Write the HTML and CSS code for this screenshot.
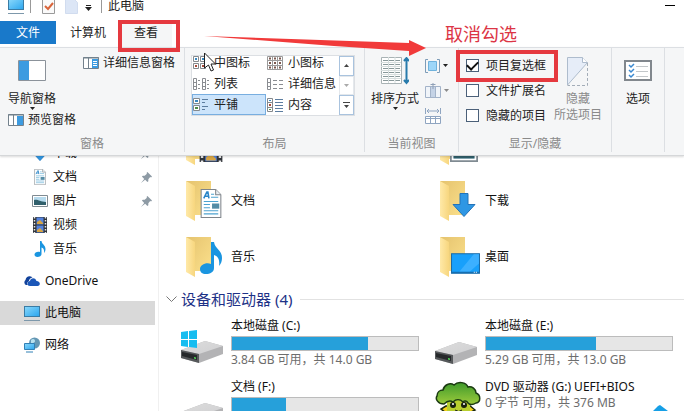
FILE: index.html
```html
<!DOCTYPE html>
<html lang="zh-CN">
<head>
  <meta charset="UTF-8" />
  <meta name="viewport" content="width=device-width, initial-scale=1" />
  <title>此电脑</title>
  <link rel="stylesheet" href="styles.css">
</head>
<body>

  <!-- shared icons -->
  <svg class="defs" aria-hidden="true">
    <defs>
      <linearGradient id="screenFill" x1="0" y1="0" x2="1" y2="1">
        <stop offset="0" stop-color="#8ad8fb" /><stop offset="1" stop-color="#2aa5ee" />
      </linearGradient>
      <linearGradient id="folderFill" x1="0" y1="0" x2="1" y2="1">
        <stop offset="0" stop-color="#e5c36e" /><stop offset="1" stop-color="#fbe08c" />
      </linearGradient>
      <linearGradient id="flapFill" x1="0" y1="0" x2="1" y2="0">
        <stop offset="0" stop-color="#ffe9a8" /><stop offset="1" stop-color="#f7d67e" />
      </linearGradient>
      <linearGradient id="driveFill" x1="0" y1="0" x2="1" y2="1">
        <stop offset="0" stop-color="#dcdcdc" /><stop offset="1" stop-color="#d0d0d2" />
      </linearGradient>
      <linearGradient id="leafFill" x1="0" y1="0" x2="0" y2="1">
        <stop offset="0" stop-color="#3f9a2c" /><stop offset="1" stop-color="#9ccb3b" />
      </linearGradient>
      <symbol id="pc" viewBox="0 0 16 16">
        <rect x=".5" y="1.5" width="15" height="10" fill="url(#screenFill)" stroke="#3a7ca5" />
        <path d="M0 15.5h16" stroke="#7d98ab" />
      </symbol>
      <symbol id="note" viewBox="0 0 22 32">
        <path d="M11 0h3c1 7 8 8 8 16 0 3-1 6-3 8 1-6-1-10-5-11v13c0 4-4 6-8 6-4 0-6-2-6-5 0-4 6-7 11-5z" fill="#1a95e0" />
      </symbol>
      <symbol id="doc" viewBox="0 0 20 28">
        <path d="M.5.5h14l5 5v22H.5z" fill="#fff" stroke="#7f858b" />
        <path d="M14.5.5v5h5" fill="#e8eef2" stroke="#7f858b" />
        <path d="M3 9 6 3h1l1 6M4 7h4" stroke="#2a86c8" stroke-width="1.5" fill="none" />
        <path d="M10 5h3M10 8h7M3 12h14M3 15h6M3 18h6M3 21h14M3 24h14" stroke="#4da3d0" />
        <path d="M11 14h7v5h-7z" fill="#548ca5" />
      </symbol>
      <symbol id="film" viewBox="0 0 16 16">
        <path d="M1 0h14v16H1z" fill="#30343a" />
        <path d="M4.5.5h7v7h-7zM4.5 8.5h7v7h-7z" fill="#5583dd" />
        <path d="M5 5l3-2 3 3v1H5zM5 13l3-2 3 3v1H5z" fill="#d8a543" />
        <path d="M2.5 0v16M13.5 0v16" stroke="#e8e8e8" stroke-width="1.5" stroke-dasharray="1.5 1.5" />
      </symbol>
      <symbol id="photo" viewBox="0 0 16 12">
        <path d="M.5.5h15v11H.5z" fill="#fff" stroke="#808b92" />
        <path d="M2 2h12v8H2z" fill="#b7dbee" />
        <path d="M2 5c4-1 6 2 12 2v3H2z" fill="#31606c" />
      </symbol>
      <symbol id="arrowDown" viewBox="0 0 24 24">
        <path d="M8 .5h8v11h7L12 23.5 1 11.5h7z" fill="#2f97e4" stroke="#2373b8" />
      </symbol>
      <symbol id="pin" viewBox="0 0 12 12">
        <path d="M7 0l5 5-1 1-1-.5L8 8v2L7 11 4.500 8.500 0 12 3.500 7.500 1 5l1-1h2l2.500-2L6 1z" fill="#8e9ba5" />
      </symbol>
      <symbol id="folder" viewBox="0 0 26 42">
        <path d="M0 1h25v34H8z" fill="url(#folderFill)" />
        <path d="M0 1l9 5v35l-9-5z" fill="url(#flapFill)" />
      </symbol>
      <symbol id="drive" viewBox="0 0 42 22">
        <path d="M0 9 24 0l18 5v8L18 22 0 17z" fill="#b3b3b5" />
        <path d="M0 9 24 0l18 5-24 8z" fill="url(#driveFill)" />
        <path d="M0 9l18 4v9L0 17z" fill="#55585a" />
        <path d="M1 11l15 3v5L1 15z" fill="#26292b" />
        <path d="M13 16l2 .5v1.5l-2-.5z" fill="#53dc58" />
      </symbol>
      <symbol id="caret" viewBox="0 0 5 3">
        <path d="M0 0h5L2.5 3z" fill="currentColor" />
      </symbol>
    </defs>
  </svg>

  <div class="window">
    <header class="titlebar">
      <svg class="icon16" aria-hidden="true"><use href="#pc" /></svg>
      <span class="sep"></span>
      <button class="quick" aria-label="属性">
        <svg width="13" height="16"><path d="M.5.5h12v15H.5z" fill="#fafafa" stroke="#9a9a9a" /><path d="M3 8l3 3 5-6" fill="none" stroke="#d9653b" stroke-width="2" /></svg>
      </button>
      <button class="quick" aria-label="新建文件夹">
        <svg width="13" height="16"><path d="M.5.5h8l4 4v11H.5z" fill="#dce6f6" stroke="#d1dcef" /></svg>
      </button>
      <button class="quick small" aria-label="自定义快速访问工具栏">
        <svg width="7" height="6"><path d="M1 0h5v1H1zM0 2h7L3.5 6z" fill="#222" /></svg>
      </button>
      <span class="sep"></span>
      <span class="title">此电脑</span>
      <button class="minimize" aria-label="最小化"></button>
    </header>

    <nav class="tabs">
      <button class="tab file">文件</button>
      <button class="tab">计算机</button>
      <button class="tab active">查看</button>
    </nav>

    <section class="ribbon">
      <div class="group panes">
        <div class="tools">
          <div class="stack">
            <button class="big">
              <svg width="28" height="21"><path d="M.5.5h27v20H.5z" fill="#fff" stroke="#8b929a" /><path d="M1 1h10v19H1z" fill="#3d9be0" /></svg>
              <span>导航窗格</span>
              <svg class="caret"><use href="#caret" /></svg>
            </button>
            <button class="line">
              <svg width="16" height="12"><path d="M.5.5h15v11H.5z" fill="#fff" stroke="#73818c" /><path d="M0 1h16M5.5 1v11" stroke="#73818c" /><path d="M9 2h6v9H9z" fill="#3d9be0" /></svg>
              预览窗格
            </button>
          </div>
          <button class="line details">
            <svg width="16" height="12"><path d="M.5.5h15v11H.5z" fill="#fff" stroke="#73818c" /><path d="M0 1h16M5.5 1v11" stroke="#73818c" /><path d="M9 2h6v9H9z" fill="#3d9be0" /><path d="M10 4.5h4M10 6.5h4M10 8.5h4" stroke="#fff" /></svg>
            详细信息窗格
          </button>
        </div>
        <h2>窗格</h2>
      </div>

      <div class="group layout">
        <div class="tools">
          <div class="gallery">
            <div class="views">
              <button class="view"><svg width="16" height="14"><path d="M.5.5h5v5h-5zM7.5.5h5v5h-5zM.5 7.5h5v5h-5zM7.5 7.5h5v5h-5z" fill="#fff" stroke="#85898d" /><path d="M2 2h2v2H2zM9 2h2v2H9z" fill="#3988c0" /><path d="M2 9h2v2H2zM9 9h2v2H9z" fill="#a84b39" /></svg>中图标</button>
              <button class="view"><svg width="16" height="14"><path d="M.5.5h15v13H.5zM5.5 0v14M10.5 0v14M0 4.5h16M0 9.5h16" fill="#fff" stroke="#9a9a9a" /><path d="M2 2.5h13M2 7h13M2 11.5h13" stroke="#7d5a50" stroke-width="2" stroke-dasharray="2 3" /></svg>小图标</button>
              <button class="view"><svg width="16" height="12"><path d="M.5.5h3v11h-3zM9.5.5h3v11h-3zM0 4.5h4M0 8.5h4M9 4.5h4M9 8.5h4M5 2.5h2M5 6.5h2M5 10.5h2M14 2.5h2M14 6.5h2M14 10.5h2" fill="#fff" stroke="#8a8d92" /></svg>列表</button>
              <button class="view"><svg width="16" height="12"><path d="M.5.5h3v11h-3zM0 4.5h4M0 8.5h4M6 2.5h4M12 2.5h4M6 6.5h4M12 6.5h4M6 10.5h4M12 10.5h4" fill="#fff" stroke="#8a8d92" /></svg>详细信息</button>
              <button class="view selected"><svg width="16" height="14"><path d="M.5.5h6v5h-6zM.5 7.5h6v5h-6z" fill="#fff" stroke="#85898d" /><path d="M2 2h3v2H2z" fill="#3988c0" /><path d="M2 9h3v2H2z" fill="#4f8a45" /><path d="M9 1.5h6M9 4.5h3M9 8.5h6M9 11.5h3" stroke="#5c7da0" /></svg>平铺</button>
              <button class="view"><svg width="16" height="14"><path d="M.5.5h5v13h-5zM0 4.5h6M0 9.5h6" fill="#fff" stroke="#85898d" /><path d="M2 2h2v1H2z" fill="#3988c0" /><path d="M2 6h2v2H2z" fill="#a84b39" /><path d="M2 11h2v1H2z" fill="#4f8a45" /><path d="M8 1.5h8M8 4.5h8M8 7.5h8M8 10.5h8M8 13.5h8" stroke="#5c7da0" /></svg>内容</button>
            </div>
            <div class="scroller">
              <button aria-label="上一行"><svg width="5" height="3"><path d="M0 3h5L2.5 0z" fill="#444" /></svg></button>
              <button aria-label="下一行" disabled><svg width="5" height="3"><path d="M0 0h5L2.5 3z" fill="#aaa" /></svg></button>
              <button aria-label="更多"><svg width="7" height="6"><path d="M0 0h7v1H0zM1 3h5L3.5 6z" fill="#444" /></svg></button>
            </div>
          </div>
        </div>
        <h2>布局</h2>
      </div>

      <div class="group current">
        <div class="tools">
          <button class="big sort">
            <svg width="28" height="28"><path d="M.5.5h20v26H.5z" fill="#fff" stroke="#a9b3b5" /><path d="M2 3.5h18M2 7.5h18M2 11.5h18M2 15.5h18M2 19.5h18M2 23.5h18" stroke="#88989a" stroke-dasharray="5 1" /><path d="M0 5.5h20M0 9.5h20M0 13.5h20M0 17.5h20M0 21.5h20M7.5 0v26M14 0v26" stroke="#d5dddd" /><path d="M25.500 2v23M23 4l2.500-3L28 4M23 23l2.500 3L28 23" fill="none" stroke="#287bac" stroke-width="2" /></svg>
            <span>排序方式</span>
            <svg class="caret"><use href="#caret" /></svg>
          </button>
          <div class="column">
            <button aria-label="分组依据"><svg width="15" height="14"><path d="M3 .5H.5v13H3M12 .5h2.500v13H12" fill="none" stroke="#7d9cb8" /><path d="M3.500 2.500h8v9h-8z" fill="#9dd6f8" stroke="#6fb2dc" /></svg><svg class="caret"><use href="#caret" /></svg></button>
            <button aria-label="添加列" disabled><svg width="16" height="16"><path d="M.5 3.5h15v11H.5zM5.5 3v12M10.5 3v12" fill="#f0f4f9" stroke="#a3b3c9" /><path d="M6 4h4v10H6z" fill="#c5d3e6" /><path d="M8 0v6M5.5 1.5h5" stroke="#8fa0b7" /></svg><svg class="caret"><use href="#caret" /></svg></button>
            <button aria-label="将所有列调整为合适的大小" disabled><svg width="16" height="16"><path d="M.5 0v6M15.5 0v6M2 3h12M4 1L2 3l2 2M12 1l2 2-2 2" fill="none" stroke="#8fa5c1" /><path d="M.5 8.5h15v7H.5zM0 10.5h16M5.5 9v7M10.5 9v7" fill="#fff" stroke="#8fa5c1" /></svg></button>
          </div>
        </div>
        <h2>当前视图</h2>
      </div>

      <div class="group show">
        <div class="tools">
          <div class="checks">
            <label class="check marked"><input type="checkbox" checked>项目复选框</label>
            <label class="check"><input type="checkbox">文件扩展名</label>
            <label class="check"><input type="checkbox">隐藏的项目</label>
          </div>
          <button class="big hide" disabled>
            <svg width="22" height="29"><path d="M.5 28V.5h15l5 5L.5 28z" fill="#e6edf8" stroke="#aebccd" /><path d="M15.5.5v5h5" fill="#fff" stroke="#aebccd" /><path d="M20.5 6v22.500H.5" fill="none" stroke="#a3adb8" stroke-dasharray="3 2" /></svg>
            <span>隐藏<br>所选项目</span>
          </button>
        </div>
        <h2>显示/隐藏</h2>
      </div>

      <div class="group options">
        <div class="tools">
          <button class="big">
            <svg width="28" height="21"><path d="M1 1h26v19H1z" fill="#fff" stroke="#81878d" stroke-width="2" /><path d="M5 5l2 2 3-3M5 10l2 2 3-3M5 15l2 2 3-3" fill="none" stroke="#3b89d0" stroke-width="1.5" /><path d="M12 6.5h12M12 11.5h12M12 16.5h12" stroke="#c3c7ca" /></svg>
            <span>选项</span>
          </button>
        </div>
      </div>
    </section>

    <div class="explorer">
      <aside class="sidebar">
        <a class="place sub" href="#"><svg class="icon16"><use href="#arrowDown" /></svg>下载<svg class="pin"><use href="#pin" /></svg></a>
        <a class="place sub" href="#"><svg class="icon16"><use href="#doc" /></svg>文档<svg class="pin"><use href="#pin" /></svg></a>
        <a class="place sub" href="#"><svg class="icon16"><use href="#photo" /></svg>图片<svg class="pin"><use href="#pin" /></svg></a>
        <a class="place sub" href="#"><svg class="icon16"><use href="#film" /></svg>视频</a>
        <a class="place sub" href="#"><svg class="icon16"><use href="#note" /></svg>音乐</a>
        <a class="place root" href="#"><svg class="icon16" viewBox="0 0 16 16"><path d="M2 12a3 3 0 0 1-.5-5C2 3 6 2 8.500 4.500 6 5 5 7 5 8c-2 1-2.500 3-1 4z" fill="#12429b" /><path d="M6 13a2.500 2.500 0 0 1 0-5c.5-3 5-4 6.500 0 4 0 4.500 5 1 5z" fill="#1b57b8" /></svg>OneDrive</a>
        <a class="place root current-place" href="#"><svg class="icon16"><use href="#pc" /></svg>此电脑</a>
        <a class="place root" href="#"><svg class="icon16" viewBox="0 0 16 16"><circle cx="10.5" cy="6" r="5.5" fill="#6497b4" /><path d="M7 3c2-2 4-1 4 1S8 6 7 7z" fill="#b8e0ee" /><path d="M.5 6.5h10v6H.5z" fill="url(#screenFill)" stroke="#3180b5" /><path d="M2 15h7" stroke="#3180b5" /></svg>网络</a>
      </aside>

      <main class="content">
        <div class="folders">
          <a class="folder" href="#"><span class="art"><svg class="base"><use href="#folder" /></svg><svg class="badge film"><use href="#film" /></svg></span>视频</a>
          <a class="folder" href="#"><span class="art"><svg class="base"><use href="#folder" /></svg><svg class="badge photo"><use href="#photo" /></svg></span>图片</a>
          <a class="folder" href="#"><span class="art"><svg class="base"><use href="#folder" /></svg><svg class="badge doc"><use href="#doc" /></svg></span>文档</a>
          <a class="folder" href="#"><span class="art"><svg class="base"><use href="#folder" /></svg><svg class="badge down"><use href="#arrowDown" /></svg></span>下载</a>
          <a class="folder" href="#"><span class="art"><svg class="base"><use href="#folder" /></svg><svg class="badge note"><use href="#note" /></svg></span>音乐</a>
          <a class="folder" href="#"><span class="art"><svg class="base"><use href="#folder" /></svg><svg class="badge desk" viewBox="0 0 28 20"><path d="M.5.5h27v19H.5z" fill="#18a0fb" stroke="#1c6ba5" /><path d="M8 18L22 1h5v9l-9 8z" fill="#3cb0ff" /><path d="M1 18.5h26" stroke="#1567a5" /><path d="M22 18.5h4" stroke="#fff" stroke-dasharray="1 1" /></svg></span>桌面</a>
        </div>

        <h3 class="section">
          <svg width="11" height="7"><path d="M.5.5l5 5 5-5" fill="none" stroke="#777" /></svg>
          设备和驱动器 (4)
        </h3>

        <div class="drives">
          <a class="drive" href="#">
            <span class="drive-art">
              <svg width="42" height="34" viewBox="0 0 42 34"><use href="#drive" y="11" width="42" height="22" /><path d="M0 2l7-1v8H0zM8 1l8-1v9H8zM0 10h7v7l-7-1zM8 10h8v8l-8-1z" fill="#16bdf0" /></svg>
            </span>
            <span class="info">
              <span>本地磁盘 (C:)</span>
              <span class="bar"><span class="used" style="width: 73%"></span></span>
              <span class="free">3.84 GB 可用，共 14.0 GB</span>
            </span>
          </a>
          <a class="drive" href="#">
            <span class="drive-art"><svg width="42" height="22"><use href="#drive" /></svg></span>
            <span class="info">
              <span>本地磁盘 (E:)</span>
              <span class="bar"><span class="used" style="width: 59%"></span></span>
              <span class="free">5.29 GB 可用，共 13.0 GB</span>
            </span>
          </a>
          <a class="drive" href="#">
            <span class="drive-art"><svg width="42" height="22"><use href="#drive" /></svg></span>
            <span class="info">
              <span>文档 (F:)</span>
              <span class="bar"><span class="used" style="width: 29%"></span></span>
            </span>
          </a>
          <a class="drive" href="#">
            <span class="drive-art dvd">
              <svg width="46" height="46" viewBox="0 0 46 46">
                <path d="M11 25l-5 3 5 4 2 14h20l1-14 6-3-6-5z" fill="#f2d117" stroke="#1d2a10" stroke-width="1.5" />
                <path d="M12 14h23v18H12z" fill="#b8cf2e" />
                <path d="M9 23C3 23 0 18 2 15c0-4 3-6 6-6 1-5 7-8 11-5 4-4 12-3 14 2 4-1 8 2 8 6 5 2 5 9 0 10-3 2-6 2-8 0-1-2-4-3-5-1-3-3-7-3-10 0-3-2-6-1-9 2z" fill="url(#leafFill)" stroke="#1b3a12" stroke-width="1.5" />
                <circle cx="18" cy="24" r="3" fill="#182010" /><circle cx="29" cy="24" r="3" fill="#182010" />
                <circle cx="18" cy="23" r="1" fill="#fff" /><circle cx="29" cy="23" r="1" fill="#fff" />
                <path d="M20 29q4 3 7 0" fill="none" stroke="#182010" />
              </svg>
            </span>
            <span class="info">
              <span>DVD 驱动器 (G:) UEFI+BIOS</span>
              <span class="free">0 字节 可用，共 376 MB</span>
            </span>
          </a>
        </div>
      </main>
    </div>

    <!-- tutorial marks drawn over the window -->
    <svg class="arrow" viewBox="0 0 222 24" aria-hidden="true"><path d="M0 3 205 10V7l17 8-17 8v-5L130 13z" fill="#f13a3a" /></svg>
    <span class="tip">取消勾选</span>
    <svg class="cursor" viewBox="0 0 12 20" aria-hidden="true"><path d="M.5 1v15l4-3 2.500 6 2.500-1L7 12h4.500z" fill="#fff" stroke="#222" /></svg>
    <svg class="corner" viewBox="0 0 18 6" aria-hidden="true"><path d="M0 6h3l5-5 2-1 8 6z" fill="#169fe6" /></svg>
  </div>

</body>
</html>
```

FILE: styles.css
```css
:root {
  --text: #222;
  --muted: #8a8a8a;
  --ribbon: #f5f6f7;
  --line: #dcdfe3;
  --blue: #1979ca;
  --bar: #26a0da;
  --mark: #e5393f;
}

* {
  box-sizing: border-box;
}

body {
  margin: 0;
  font-family: "Noto Sans", "Noto Sans CJK SC", sans-serif;
  font-size: 12px;
  line-height: 16px;
  color: var(--text);
  background: #fff;
}

button {
  display: flex;
  align-items: center;
  padding: 0;
  border: none;
  background: none;
  font: inherit;
  color: inherit;
}

button:disabled {
  color: var(--muted);
}

a {
  color: #111;
  text-decoration: none;
}

svg {
  flex: none;
}

.defs {
  position: absolute;
  width: 0;
  height: 0;
}

.icon16 {
  width: 16px;
  height: 16px;
}

.caret {
  width: 5px;
  height: 3px;
}

.window {
  position: relative;
  display: flex;
  flex-direction: column;
  height: 100vh;
  overflow: hidden;
}

/* title bar */
.titlebar {
  display: flex;
  align-items: center;
  flex: none;
  height: 31px;
  margin-top: -10px;
  padding: 0 9px 0 8px;
}

.sep {
  width: 1px;
  height: 14px;
  margin: 0 6px;
  background: #999;
}

.quick {
  margin: 0 5px;
}

.quick.small {
  margin: 4px 3px 0 2px;
}

.minimize {
  width: 10px;
  height: 1px;
  margin-left: auto;
  background: #000;
}

/* tabs */
.tabs {
  display: flex;
  flex: none;
  height: 26px;
}

.tab {
  height: 23px;
  padding: 1px 14px 0;
}

.tab.file {
  padding: 1px 16px 0;
  background: var(--blue);
  color: #fff;
}

.tab.active {
  position: relative;
  height: 26px;
  padding-bottom: 3px;
  background: var(--ribbon);
}

.tab.active::after,
.check.marked::after {
  content: "";
  position: absolute;
  z-index: 2;
  border: 4px solid var(--mark);
}

.tab.active::after {
  inset: -1px -8px -5px -2px;
}

/* ribbon */
.ribbon {
  position: relative;
  z-index: 1;
  display: flex;
  flex: none;
  height: 109px;
  background: var(--ribbon);
  border-top: 1px solid var(--line);
  border-bottom: 1px solid #d5d7d9;
  box-shadow: 0 1px 2px rgba(0, 0, 0, 0.15);
}

.group {
  display: flex;
  flex-direction: column;
  flex: none;
  margin-bottom: 3px;
  border-right: 1px solid var(--line);
}

.group h2 {
  margin: 0;
  font-size: 12px;
  font-weight: normal;
  line-height: 16px;
  text-align: center;
  color: var(--muted);
}

.tools {
  display: flex;
  align-items: flex-start;
  flex: 1;
}

.panes {
  width: 185px;
}

.layout {
  width: 180px;
}

.current {
  width: 94px;
}

.show {
  width: 153px;
}

.options {
  width: 53px;
}

.big {
  flex-direction: column;
  padding-top: 12px;
}

.big span {
  margin-top: 10px;
}

.stack {
  display: flex;
  flex-direction: column;
  gap: 2px;
  padding-left: 8px;
}

.stack .big {
  width: 48px;
}

.line {
  gap: 4px;
}

.details {
  margin: 7px 0 0 7px;
}

.gallery {
  display: flex;
  flex: 1;
  height: 61px;
  margin: 7px 9px 0 6px;
  background: #fff;
  border: 1px solid var(--line);
}

.views {
  display: grid;
  grid-template-columns: 74px 1fr;
  grid-auto-rows: 21px;
  align-content: end;
  flex: 1;
  overflow: hidden;
}

.view {
  gap: 5px;
  padding-left: 1px;
  white-space: nowrap;
}

.view.selected {
  padding-left: 0;
  background: #cce4fb;
  border: 1px solid #78aee0;
}

.scroller {
  display: grid;
  grid-template-rows: repeat(3, 1fr);
  width: 15px;
}

.scroller button {
  justify-content: center;
  border: 1px solid #a9c3de;
}

.scroller button:disabled {
  border-color: #e4e8ec;
}

.sort {
  margin-left: 6px;
  padding-top: 9px;
}

.sort span {
  margin-top: 6px;
}

.column {
  display: grid;
  grid-auto-rows: 25px;
  padding: 5px 0 0 6px;
}

.column button {
  gap: 3px;
}

.checks {
  display: grid;
  grid-auto-rows: 25px;
  padding: 5px 0 0 7px;
}

.check {
  position: relative;
  display: flex;
  align-items: center;
  gap: 7px;
}

.check.marked::after {
  inset: -3px -12px -4px -10px;
}

.check input {
  appearance: none;
  display: grid;
  place-items: center;
  width: 13px;
  height: 13px;
  margin: 0;
  background: #fff;
  border: 1px solid #4b6079;
}

.check input:checked::before {
  content: "";
  width: 9px;
  height: 5px;
  border: solid #111;
  border-width: 0 0 2px 2px;
  transform: translateY(-1px) rotate(-45deg);
}

.hide {
  margin-left: 8px;
  padding-top: 9px;
}

.hide span {
  margin-top: 5px;
}

.options .big {
  width: 100%;
}

/* explorer body */
.explorer {
  display: flex;
  flex: 1;
  min-height: 0;
  overflow: hidden;
}

.sidebar {
  flex: none;
  width: 159px;
  margin-top: -15px;
  padding-right: 3px;
  border-right: 1px solid #f0f0f0;
}

.place {
  display: flex;
  align-items: center;
  gap: 5px;
  height: 24px;
}

.place.sub {
  padding: 0 3px 0 32px;
}

.place.root {
  margin-top: 8px;
  padding-left: 24px;
}

.current-place {
  background: #d9d9d9;
}

.pin {
  width: 11px;
  height: 11px;
  margin-left: auto;
}

.content {
  flex: 1;
  margin-top: -39px;
}

.folders,
.drives {
  display: grid;
  grid-template-columns: 1fr 1fr;
  column-gap: 16px;
  padding: 0 11px 0 22px;
}

.folders {
  grid-auto-rows: 56px;
}

.folder {
  display: flex;
  align-items: center;
  gap: 5px;
  padding-left: 5px;
}

.art {
  position: relative;
  width: 40px;
  height: 42px;
}

.base {
  width: 26px;
  height: 42px;
}

.badge {
  position: absolute;
  right: 4px;
  bottom: 4px;
}

.badge.doc {
  width: 22px;
  height: 29px;
}

.badge.note {
  width: 22px;
  height: 32px;
}

.badge.down {
  width: 24px;
  height: 26px;
}

.badge.desk {
  right: 0;
  width: 29px;
  height: 21px;
}

.badge.film {
  right: 2px;
  width: 26px;
  height: 26px;
}

.badge.photo {
  right: 2px;
  width: 28px;
  height: 21px;
}

.section {
  display: flex;
  align-items: center;
  gap: 4px;
  margin: 4px 0 9px;
  padding-left: 7px;
  font-size: 15px;
  font-weight: normal;
  line-height: 20px;
  color: #1e3287;
}

.section::after {
  content: "";
  flex: 1;
  height: 1px;
  margin-left: 4px;
  background: #e2e2e2;
}

.drives {
  grid-auto-rows: 61px;
}

.drive {
  display: flex;
}

.drive-art {
  flex: none;
  width: 50px;
  height: 46px;
  display: flex;
  align-items: flex-end;
}

.drive-art.dvd {
  align-items: flex-start;
  padding-top: 2px;
}

.info {
  display: flex;
  flex-direction: column;
  flex: 1;
  white-space: nowrap;
}

.bar {
  height: 15px;
  margin: 2px 0 1px;
  background: #e6e6e6;
  border: 1px solid #bcbcbc;
}

.used {
  display: block;
  height: 100%;
  background: var(--bar);
}

.free {
  color: #6d6d6d;
}

/* marks over the window */
.arrow,
.tip,
.cursor,
.corner {
  position: absolute;
  z-index: 3;
}

.arrow {
  left: 204px;
  top: 33px;
  width: 222px;
  height: 24px;
}

.tip {
  left: 445px;
  top: 22px;
  font-size: 18px;
  font-weight: 400;
  line-height: 24px;
  color: #dc3545;
}

.cursor {
  left: 204px;
  top: 52px;
  width: 12px;
  height: 20px;
}

.corner {
  right: 16px;
  bottom: 0;
  width: 18px;
  height: 6px;
}
```
